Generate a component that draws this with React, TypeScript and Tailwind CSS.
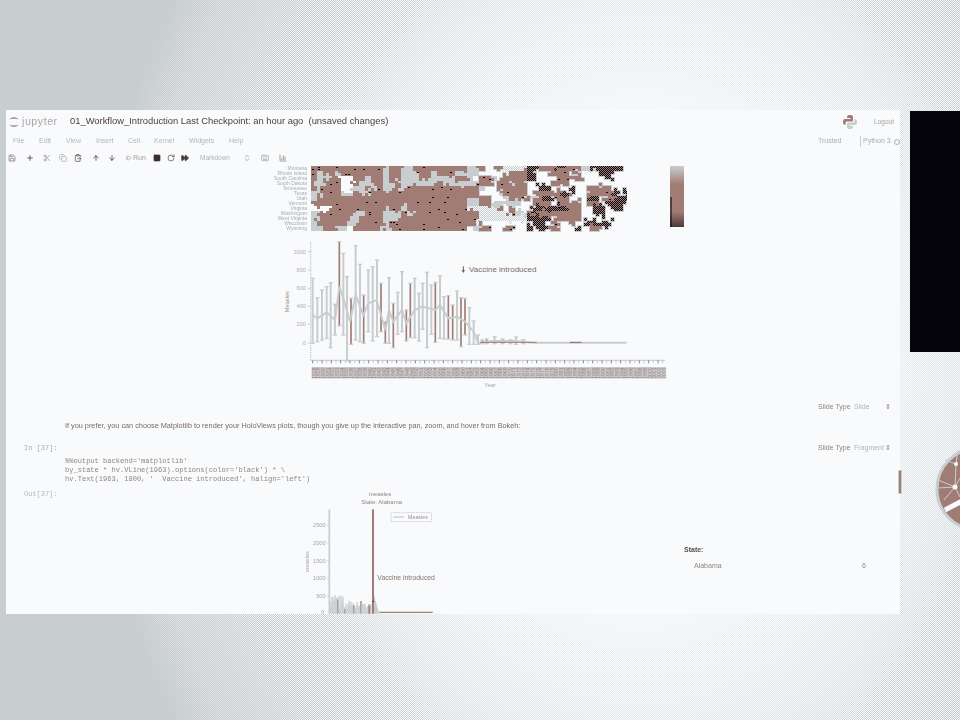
// App.tsx
import React from 'react';
import {
    Save, Plus, Scissors, Copy, ClipboardPaste, ArrowUp, ArrowDown, StepForward,
    Square, RotateCw, FastForward, Keyboard, BarChart3, ChevronsUpDown,
} from 'lucide-react';

const GREY = '#c8cdd0';
const BROWN = '#a07c74';
const BLACK = '#05040a';
const WHITE = '#f8fafc';
const FONT = '"Liberation Sans", Arial, sans-serif';

const hash = (a: number, b: number) => {
    const v = Math.sin(a * 127.1 + b * 311.7) * 43758.5453;
    return v - Math.floor(v);
};

const STATES = [
    'Montana', 'Rhode Island', 'South Carolina', 'South Dakota', 'Tennessee', 'Texas', 'Utah',
    'Vermont', 'Virginia', 'Washington', 'West Virginia', 'Wisconsin', 'Wyoming',
];

const menuItems: [string, string][] = [
    ['File', 'w-[26px]'], ['Edit', 'w-[27px]'], ['View', 'w-[30px]'], ['Insert', 'w-[32px]'],
    ['Cell', 'w-[26px]'], ['Kernel', 'w-[35px]'], ['Widgets', 'w-[40px]'], ['Help', 'w-[20px]'],
];

// run lengths per row: B brown, G grey, W white, D dark, M grey/white mix
const heatRows = [
    'B12 G1 B2 G2 B9 G2 B1 W2 B1 M4 D2 B3 D1 B3 G2 D5 W1',
    'B1 G1 B2 G1 B7 G1 B2 G3 B2 G1 B3 G4 W5 B3 D1 W3 B3 W5 D2 W3',
    'B1 G2 B2 W2 B2 G1 B2 G1 B2 G3 B2 G4 B2 G1 W1 B2 G1 W1 B4 D2 W3 B4 W4 D1 W3',
    'B1 G1 B3 W2 B1 G2 B2 G2 B1 G6 B1 G6 B2 W1 B2 G1 B2 W4 B3 W10',
    'B5 W2 G2 B1 G1 B1 G2 B1 G1 B12 G1 W2 B5 W2 D2 W3 D1 W2 B4 W3',
    'G2 B3 G2 B1 G2 B18 W4 B4 W1 B5 D1 W3 B4 D1 W1 D1',
    'G1 B25 G2 B2 W2 G1 B3 G2 D2 W1 B2 W3 D2 W1 B2 D2',
    'B26 G2 B2 G5 W2 B3 W1 B4 W1 B2 W1 D3 W1',
    'W3 B9 G1 B2 G1 B10 M5 B1 W1 B1 W3 D6 B2 W2 D2 W1 D2 W1',
    'G1 B6 G2 B3 G3 B1 G1 B11 M5 B1 G2 B9 W2 D2 W4',
    'G1 B5 G2 B4 G3 B13 M8 D4 W1 B4 W8',
    'G1 B5 G2 B4 G1 B15 W9 D2 W1 B1 W2 B1 W2 D4 W3',
    'G2 B2 G2 W1 B5 G1 B13 W1 G1 B2 W2 B2 W2 D1 W1 D1 W1 B1 W3 D1 W1 B2 W5',
];

// expand the run lengths into one string per row
const heatGrid = heatRows.map((row) =>
    row.split(' ').map((run) => run[0].repeat(Number(run.slice(1)))).join('').padEnd(53, 'W'),
);

// [x, top, bottom, brown?] in 3x coordinates of the first chart
const errorBars: [number, number, number, boolean][] = [
    [98, 130, 325, false], [112, 188, 320, false], [126, 165, 315, false], [140, 155, 310, false],
    [152, 143, 338, false], [165, 208, 300, false], [178, 20, 272, true], [190, 55, 300, false],
    [201, 125, 378, false], [213, 190, 328, true], [227, 32, 315, false], [240, 88, 320, false],
    [251, 180, 325, true], [265, 105, 290, false], [278, 95, 318, false], [291, 75, 305, false],
    [303, 145, 290, true], [316, 260, 325, true], [327, 128, 325, false], [340, 205, 338, true],
    [353, 172, 298, false], [366, 110, 290, false], [379, 225, 318, true], [391, 145, 308, true],
    [404, 130, 308, false], [417, 175, 318, false], [428, 145, 283, false], [441, 112, 338, false],
    [454, 150, 298, false], [466, 142, 322, true], [480, 122, 310, false], [492, 185, 312, false],
    [505, 182, 312, true], [518, 210, 315, true], [531, 168, 315, false], [543, 188, 335, true],
    [555, 190, 300, true], [568, 218, 328, false], [581, 258, 328, false], [594, 300, 328, false],
    [607, 315, 326, true], [620, 312, 326, true], [644, 305, 326, false], [668, 312, 326, true],
    [692, 314, 326, true], [708, 306, 328, false], [730, 314, 326, false],
];

const meanLine =
    '98,240 112,250 140,232 165,255 178,155 190,190 210,260 227,180 250,240 265,205 290,195 316,285 327,225 340,260 366,225 379,265 404,225 428,215 466,225 480,210 505,250 531,245 555,260 581,290 594,323 640,318 700,318 760,323 1040,323';

const Heatmap = () => {
    const fills: Record<string, string> = { B: BROWN, G: GREY, D: 'url(#hmDark)', M: 'url(#hmMix)' };
    const cells: React.ReactNode[] = [];
    const halo: React.ReactNode[] = [];
    for (let sr = 0; sr < 26; sr++) {
        for (let sc = 0; sc < 106; sc++) {
            // nudge the lookup a little so the blocks get rough edges
            const jx = hash(sc, sr) > 0.75 ? (hash(sc + 7, sr) > 0.5 ? 1 : -1) : 0;
            const jy = hash(sc, sr + 9) > 0.75 ? (hash(sc, sr + 3) > 0.5 ? 1 : -1) : 0;
            const row = heatGrid[Math.min(12, Math.max(0, Math.floor((sr + jy) / 2)))];
            const kind = row[Math.min(52, Math.max(0, Math.floor((sc + jx) / 2)))];
            const x = sc * 3;
            const y = Math.floor(sr * 2.5);
            if (kind === 'W') continue;
            cells.push(<rect key={`${sr}-${sc}`} x={x} y={y} width={3} height={3} fill={fills[kind]} />);
            if (sc >= 52 && (kind === 'B' || kind === 'D')) {
                halo.push(<rect key={`h${sr}-${sc}`} x={x - 1} y={y - 1} width={5} height={5} fill={GREY} />);
            }
            if (kind === 'B' && hash(sc + 31, sr + 17) > 0.96) {
                cells.push(<rect key={`s${sr}-${sc}`} x={x + 1} y={y + 1} width={2} height={1} fill={BLACK} />);
            }
        }
    }
    return (
        <svg width={316} height={66} className="shrink-0" shapeRendering="crispEdges">
            <defs>
                <pattern id="hmDark" width={2} height={2} patternUnits="userSpaceOnUse">
                    <rect width={2} height={2} fill={BROWN} />
                    <rect width={1} height={1} fill={BLACK} />
                    <rect x={1} y={1} width={1} height={1} fill={BLACK} />
                </pattern>
                <pattern id="hmMix" width={2} height={2} patternUnits="userSpaceOnUse">
                    <rect width={2} height={2} fill={WHITE} />
                    <rect width={1} height={1} fill={GREY} />
                    <rect x={1} y={1} width={1} height={1} fill={GREY} />
                </pattern>
            </defs>
            {halo}
            {cells}
        </svg>
    );
};

const ColorBar = () => (
    <svg width={14} height={61} className="ml-[43px] shrink-0 self-start">
        <defs>
            <linearGradient id="cbar" x1="0" y1="0" x2="0" y2="1">
                <stop offset="0" stopColor={GREY} />
                <stop offset="0.3" stopColor={BROWN} />
                <stop offset="0.75" stopColor={BROWN} />
                <stop offset="1" stopColor="#4a3a38" />
            </linearGradient>
        </defs>
        <rect width={14} height={61} fill="url(#cbar)" />
        <line x1={1} y1={31} x2={1} y2={61} stroke={BLACK} strokeWidth={1} />
    </svg>
);

const BokehChart = () => {
    const years = Array.from({ length: 76 }, (_, i) => 1928 + i);
    return (
        <svg width={400} height={160} viewBox="0 0 1200 480" className="block" fontFamily={FONT}>
            <line x1={92} y1={22} x2={92} y2={375} stroke={GREY} strokeWidth={4} strokeDasharray="4 3" />
            <line x1={92} y1={376} x2={1155} y2={376} stroke={GREY} strokeWidth={4} />
            {[[50, '1000'], [105, '800'], [160, '600'], [214, '400'], [268, '200'], [324, '0']].map(([y, t]) => (
                <g key={t as string}>
                    <line x1={84} x2={92} y1={y as number} y2={y as number} stroke={GREY} strokeWidth={3} />
                    <text x={78} y={(y as number) + 6} textAnchor="end" fontSize={17} fill="#b3afaf">{t}</text>
                </g>
            ))}
            <text x={0} y={0} transform="translate(26,200) rotate(-90)" textAnchor="middle" fontSize={17} fill="#a58e88">Measles</text>
            {errorBars.map(([x, top, bottom, brown]) => (
                <g key={x} stroke={brown ? BROWN : GREY} strokeWidth={brown ? 5 : 6}>
                    <line x1={x} x2={x} y1={top} y2={bottom} />
                    <line x1={x - 6} x2={x + 6} y1={top} y2={top} stroke={GREY} strokeWidth={4} />
                    <line x1={x - 6} x2={x + 6} y1={bottom} y2={bottom} stroke={GREY} strokeWidth={4} />
                </g>
            ))}
            <polyline points={meanLine} fill="none" stroke={GREY} strokeWidth={6} />
            <line x1={600} x2={770} y1={322} y2={322} stroke={BROWN} strokeWidth={3} />
            <line x1={870} x2={905} y1={322} y2={322} stroke="#8a6c66" strokeWidth={3} />
            <line x1={550} x2={550} y1={94} y2={110} stroke="#6f5c58" strokeWidth={3} />
            <path d="M545 105 L550 114 L555 105Z" fill="#6f5c58" />
            <text x={567} y={111} fontSize={24} fill="#7d6a66">Vaccine introduced</text>
            {years.map((y, i) => (
                <line key={y} x1={98 + i * 14} x2={98 + i * 14} y1={376} y2={385} stroke={i % 2 ? GREY : BROWN} strokeWidth={3} />
            ))}
            <rect x={95} y={396} width={1062} height={34} fill={GREY} />
            {years.map((y, i) => (
                <text key={y} transform={`translate(${107 + i * 14},431) rotate(-90)`} fontSize={15} fill={BROWN}>{y}</text>
            ))}
            <text x={630} y={456} textAnchor="middle" fontSize={17} fill="#a9a5a5">Year</text>
        </svg>
    );
};

const MatplotlibChart = () => {
    const spikes = Array.from({ length: 42 }, (_, i) => i);
    return (
        <svg width={200} height={125} viewBox="0 0 600 375" className="block" fontFamily={FONT}>
            <text x={270} y={22} textAnchor="middle" fontSize={18} fill="#8f8583">measles</text>
            <text x={275} y={46} textAnchor="middle" fontSize={18} fill="#8f8583">State: Alabama</text>
            <line x1={118} y1={61} x2={118} y2={374} stroke={GREY} strokeWidth={5} />
            {[[109, '2500'], [162, '2000'], [215, '1500'], [268, '1000'], [321, '500']].map(([y, t]) => (
                <g key={t as string}>
                    <line x1={112} x2={118} y1={y as number} y2={y as number} stroke={GREY} strokeWidth={3} />
                    <text x={107} y={(y as number) + 6} textAnchor="end" fontSize={17} fill="#a9a5a5">{t}</text>
                </g>
            ))}
            <text x={98} y={374} textAnchor="middle" fontSize={17} fill="#a9a5a5">0</text>
            <text transform="translate(58,218) rotate(-90)" textAnchor="middle" fontSize={17} fill="#a9a5a5">measles</text>
            <rect x={303} y={71} width={121} height={27} fill="none" stroke={GREY} strokeWidth={3} strokeDasharray="3 2" />
            <line x1={310} x2={342} y1={84} y2={84} stroke={GREY} strokeWidth={4} />
            <text x={354} y={90} fontSize={16} fill="#a08f8b">Measles</text>
            {spikes.map((i) => (
                <line
                    key={i}
                    x1={120 + i * 3}
                    x2={120 + i * 3}
                    y1={360 - hash(i, 2) * (i < 14 ? 48 : 26)}
                    y2={374}
                    stroke={hash(i, 5) > 0.78 ? BROWN : GREY}
                    strokeWidth={4}
                />
            ))}
            <rect x={246} y={61} width={6} height={313} fill={BROWN} />
            <polygon points="252,316 258,340 268,374 252,374" fill={GREY} />
            <rect x={248} y={336} width={3} height={3} fill={BLACK} />
            <line x1={268} x2={428} y1={370} y2={370} stroke={BROWN} strokeWidth={4} />
            <text x={262} y={272} fontSize={20.5} fill="#86726d">Vaccine introduced</text>
        </svg>
    );
};

const SlideType = ({ value }: { value: string }) => (
    <div className="flex h-full items-center pl-[812px] text-[7px] blur-[0.3px]">
        <span className="w-[36px] text-[#8f8583]">Slide Type</span>
        <span className="w-[31px] text-[#b0b3b5]">{value}</span>
        <span className="text-[#8f8583]">⇕</span>
    </div>
);

const App: React.FC = () => {
    const iconProps = { size: 8, strokeWidth: 2.4 };

    return (
        <div
            className="relative h-[720px] w-[960px] overflow-hidden bg-[#f8fafc] bg-[radial-gradient(ellipse_550px_700px_at_640px_360px,rgba(200,205,208,0)_71%,rgba(200,205,208,0.5)_92%,#c8cdd0_100%)] pt-[110px] pl-[6px]"
            style={{ fontFamily: FONT }}
        >
            {/* stippled wallpaper */}
            <div className="absolute inset-0 bg-[repeating-conic-gradient(#c8cdd0_0_25%,transparent_0_50%)] bg-size-[2px_2px] [mask-image:radial-gradient(ellipse_550px_700px_at_640px_360px,transparent_30%,rgba(0,0,0,0.4)_50%,rgba(0,0,0,0.6)_58%,#000_71%)]" />

            <div className="relative flex h-[504px] w-[894px] flex-col overflow-hidden bg-[#f8fafc]">
                {/* header */}
                <div className="flex h-[23px] shrink-0 items-center pr-[6px] blur-[0.3px]">
                    <svg width={12} height={14} viewBox="0 0 12 14" className="ml-[2px] shrink-0">
                        <path d="M1 4.5 Q6 -0.5 11 4.5 Q6 2.8 1 4.5Z M1 9.5 Q6 14.5 11 9.5 Q6 11.2 1 9.5Z" fill="#9c9898" />
                    </svg>
                    <span className="ml-[2px] w-[48px] shrink-0 text-[10.5px] tracking-[0.6px] text-[#a9a5a5]">jupyter</span>
                    <span className="shrink-0 text-[9.4px] whitespace-pre text-[#4d3d3b]">01_Workflow_Introduction Last Checkpoint: an hour ago  (unsaved changes)</span>
                    <svg width={16} height={16} viewBox="0 0 16 16" className="ml-auto shrink-0">
                        <path d="M8 1 C5 1 5 2.5 5 4 H8.5 V5 H3 C1 5 1 7 1 8.5 C1 10 2 11 3.5 11 V9 C3.5 8 4.5 7.5 5.5 7.5 H9.5 C10.5 7.5 11 7 11 6 V3 C11 1.5 10 1 8 1Z" fill={BROWN} />
                        <path d="M8 15 C11 15 11 13.5 11 12 H7.5 V11 H13 C15 11 15 9 15 7.5 C15 6 14 5 12.5 5 V7 C12.5 8 11.5 8.5 10.5 8.5 H6.5 C5.5 8.5 5 9 5 10 V13 C5 14.5 6 15 8 15Z" fill={GREY} />
                    </svg>
                    <span className="ml-[16px] text-[6.5px] text-[#a9a5a5]">Logout</span>
                </div>
                {/* menu */}
                <div className="flex h-[17px] shrink-0 items-center pl-[7px] text-[7px] text-[#b4b8ba] blur-[0.3px]">
                    {menuItems.map(([label, width]) => (
                        <span key={label} className={width}>{label}</span>
                    ))}
                    <span className="ml-[569px] w-[42px] text-[#a9adaf]">Trusted</span>
                    <span className="border-l border-[#c8cdd0] pl-[2px] text-[#a9adaf]">Python 3</span>
                    <span className="ml-[3px] h-[6px] w-[6px] rounded-full border border-[#a9adaf]" />
                </div>
                {/* toolbar */}
                <div className="flex h-[16px] shrink-0 items-center text-[7px] text-[#a39b9a] blur-[0.3px]">
                    <span className="ml-[2px] text-[#8f8583]"><Save {...iconProps} /></span>
                    <span className="ml-[10px] text-[#4a3e3d]"><Plus {...iconProps} /></span>
                    <span className="ml-[9px] text-[#a39b9a]"><Scissors {...iconProps} /></span>
                    <span className="ml-[8px] text-[#a9adaf]"><Copy {...iconProps} /></span>
                    <span className="ml-[7px] text-[#6b5a58]"><ClipboardPaste {...iconProps} /></span>
                    <span className="ml-[10px] text-[#4a3e3d]"><ArrowUp {...iconProps} /></span>
                    <span className="ml-[8px] text-[#4a3e3d]"><ArrowDown {...iconProps} /></span>
                    <span className="ml-[10px] flex w-[21px] items-center gap-[1px]"><StepForward size={6} strokeWidth={2.4} /> Run</span>
                    <span className="ml-[6px] w-[8px] text-[#3a2f2e]"><Square size={8} fill="currentColor" /></span>
                    <span className="ml-[6px] text-[#6b5a58]"><RotateCw {...iconProps} /></span>
                    <span className="ml-[6px] text-[#4a3e3d]"><FastForward {...iconProps} fill="currentColor" /></span>
                    <span className="ml-[11px] w-[30px] text-[6.5px] whitespace-nowrap text-[#b0b3b5]">Markdown</span>
                    <span className="ml-[13px] text-[#a39b9a]"><ChevronsUpDown {...iconProps} /></span>
                    <span className="ml-[10px] text-[#a9adaf]"><Keyboard {...iconProps} /></span>
                    <span className="ml-[10px] text-[#8f8583]"><BarChart3 {...iconProps} /></span>
                </div>
                {/* notebook */}
                <div className="min-h-0 flex-1 overflow-hidden">
                    <div className="flex h-[69px] pl-[265px]">
                        <div className="flex w-[40px] flex-col items-end pr-[4px] text-[5px] leading-[5px] text-[#a9adaf] blur-[0.2px]">
                            {STATES.map((s) => (
                                <span key={s} className="whitespace-nowrap">{s}</span>
                            ))}
                        </div>
                        <Heatmap />
                        <ColorBar />
                    </div>
                    <div className="h-[160px] pl-[274px]">
                        <BokehChart />
                    </div>
                    <div className="h-[24px]"><SlideType value="Slide" /></div>
                    <p className="mt-[1px] h-[12px] pl-[59px] text-[7.3px] leading-[12px] whitespace-nowrap text-[#7d6a66] blur-[0.3px]">
                        If you prefer, you can choose Matplotlib to render your HoloViews plots, though you give up the interactive pan, zoom, and hover from Bokeh:
                    </p>
                    <div className="relative mt-[8px] h-[16px]">
                        <SlideType value="Fragment" />
                        <span className="absolute top-[1px] left-[18px] font-['Liberation_Mono'] text-[7px] leading-[14px] text-[#a9adaf] blur-[0.3px]">In [37]:</span>
                    </div>
                    <pre className="mt-[1px] h-[30px] pl-[59px] font-['Liberation_Mono'] text-[7.05px] leading-[9px] text-[#8f8583] blur-[0.3px]">
{`%%output backend='matplotlib'
by_state * hv.VLine(1963).options(color='black') * \\
hv.Text(1963, 1800, '  Vaccine introduced', halign='left')`}
                    </pre>
                    <div className="flex h-[125px]">
                        <span className="w-[18px]" />
                        <span className="w-[266px] font-['Liberation_Mono'] text-[7px] leading-[14px] text-[#b4b8ba] blur-[0.3px]">Out[37]:</span>
                        <div className="mt-[2px] blur-[0.2px]"><MatplotlibChart /></div>
                        <div className="ml-[194px] w-[200px] pt-[58px] text-[7px] blur-[0.3px]">
                            <div className="font-bold text-[#5f4d4a]">State:</div>
                            <div className="mt-[5px] flex pl-[10px] text-[#8f8583]">
                                <span className="w-[168px]">Alabama</span>
                                <span>6</span>
                            </div>
                        </div>
                    </div>
                </div>
            </div>

            {/* scrollbar thumb */}
            <div className="absolute top-[470px] left-[898px] h-[24px] w-[4px] border border-[#c8cdd0] bg-[#a07c74]" />
            {/* other window behind */}
            <div className="absolute top-[111px] left-[910px] h-[241px] w-[50px] bg-[#05040a]" />
            {/* round logo */}
            <svg width={30} height={100} viewBox="930 440 30 100" className="absolute top-[440px] left-[930px]">
                <circle cx={978} cy={489} r={41} fill={BROWN} stroke={GREY} strokeWidth={3} />
                <g stroke={GREY} strokeWidth={1}>
                    <line x1={955} y1={487} x2={938} y2={480} />
                    <line x1={955} y1={487} x2={938} y2={488} />
                    <line x1={955} y1={487} x2={944} y2={500} />
                    <line x1={955} y1={487} x2={956} y2={464} />
                    <line x1={956} y1={464} x2={945} y2={460} />
                    <line x1={956} y1={464} x2={958} y2={450} />
                    <line x1={955} y1={487} x2={960} y2={478} />
                    <line x1={955} y1={487} x2={960} y2={497} />
                </g>
                <line x1={945} y1={510} x2={962} y2={501} stroke={WHITE} strokeWidth={5} />
                <circle cx={956} cy={464} r={2} fill={WHITE} />
                <circle cx={955} cy={487} r={2.5} fill={WHITE} />
            </svg>
        </div>
    );
};

export default App;
